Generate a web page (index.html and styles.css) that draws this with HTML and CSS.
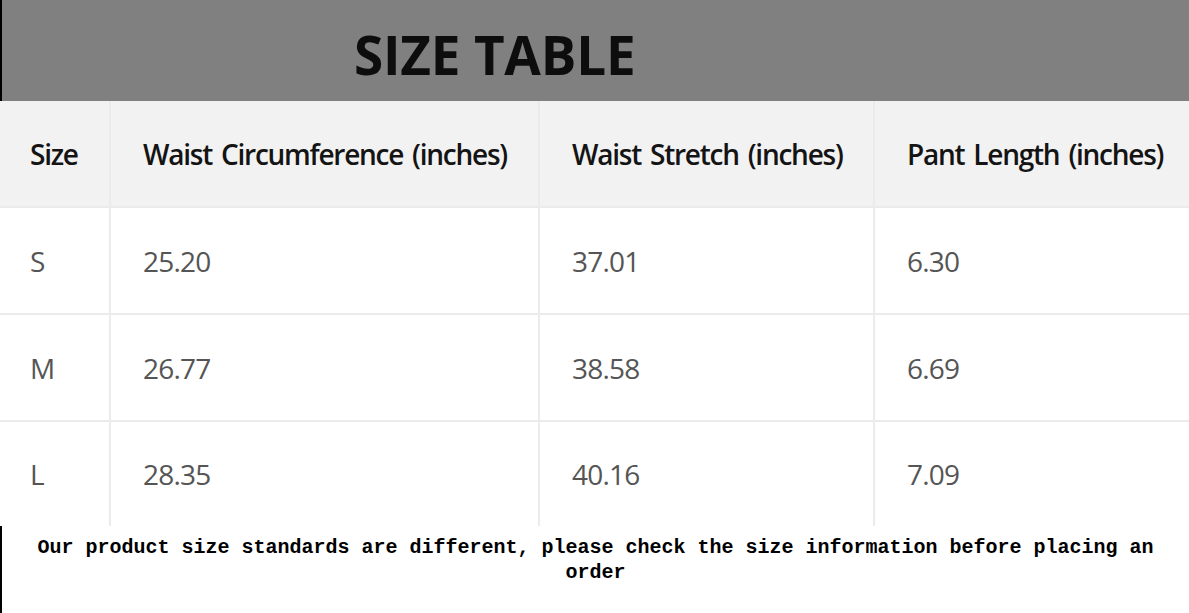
FILE: index.html
```html
<!DOCTYPE html>
<html lang="en">
<head>
<meta charset="utf-8">
<title>Size Table</title>
<link rel="stylesheet" href="styles.css">
</head>
<body>
<div class="page">
  <header class="banner"><h1 class="banner-title">SIZE TABLE</h1></header>
  <div class="table-wrap">
    <table class="size-table">
      <colgroup>
        <col class="c1"><col class="c2"><col class="c3"><col class="c4">
      </colgroup>
      <thead>
        <tr><th>Size</th><th>Waist Circumference (inches)</th><th>Waist Stretch (inches)</th><th>Pant Length (inches)</th></tr>
      </thead>
      <tbody>
        <tr><td>S</td><td>25.20</td><td>37.01</td><td>6.30</td></tr>
        <tr><td>M</td><td>26.77</td><td>38.58</td><td>6.69</td></tr>
        <tr><td>L</td><td>28.35</td><td>40.16</td><td>7.09</td></tr>
      </tbody>
    </table>
  </div>
  <p class="note">Our product size standards are different, please check the size information before placing an order</p>
</div>
</body>
</html>
```
FILE: styles.css
```css
html, body { margin: 0; padding: 0; background: #fff; }
.page { width: 1189px; height: 613px; overflow: hidden; }
.banner {
  height: 101px;
  background: #808080;
  border-left: 2px solid #000;
  box-sizing: border-box;
  display: flex;
  align-items: center;
  padding-left: 352px;
}
.banner-title {
  margin: 0;
  font-family: "Open Sans", sans-serif;
  font-weight: 700;
  font-size: 53px;
  letter-spacing: -0.2px;
  color: #0d0d0d;
  line-height: 1;
  padding-top: 8px;
}
.table-wrap { width: 1189px; overflow: hidden; }
.size-table {
  border-collapse: collapse;
  table-layout: fixed;
  width: 1200px;
  font-family: "Open Sans", sans-serif;
}
.c1 { width: 110px; }
.c2 { width: 429px; }
.c3 { width: 335px; }
.c4 { width: 326px; }
.size-table th, .size-table td {
  text-align: left;
  padding: 0 0 0 32px;
  border: 2px solid #ebebeb;
  border-top: none;
  white-space: nowrap;
}
.size-table tr > :first-child { border-left: none; padding-left: 30px; }
.size-table th {
  height: 105px;
  background: #f2f2f2;
  font-weight: 600;
  font-size: 28px;
  letter-spacing: -1.25px;
  word-spacing: 3px;
  color: #141414;
}
.size-table td {
  height: 105px;
  font-size: 28px;
  font-weight: 400;
  letter-spacing: -0.8px;
  color: #555;
}
.size-table tbody tr:last-child td { border-bottom: none; height: 104px; }
.note {
  margin: 0;
  height: 90px;
  border-left: 2px solid #000;
  box-sizing: border-box;
  padding: 9px 20px 0 20px;
  text-align: center;
  font-family: "Liberation Mono", "Courier New", monospace;
  font-weight: 700;
  font-size: 20px;
  line-height: 25px;
  color: #000;
}
```
